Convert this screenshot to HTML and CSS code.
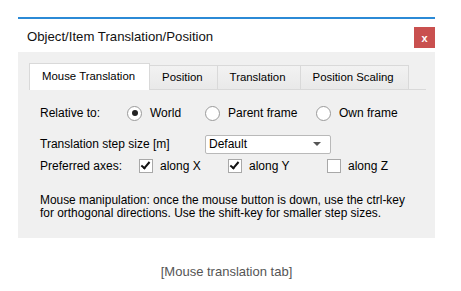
FILE: index.html
```html
<!DOCTYPE html>
<html lang="en">
<head>
    <meta charset="UTF-8">
    <title>Object/Item Translation/Position</title>
    <link rel="stylesheet" href="styles.css">
</head>
<body>
    <div class="figure">
        <div class="dialog">
            <div class="titlebar">
                <span class="title">Object/Item Translation/Position</span>
                <span class="close">x</span>
            </div>
            <div class="panel">
                <div class="tabs">
                    <div class="tab active">Mouse Translation</div>
                    <div class="tab">Position</div>
                    <div class="tab">Translation</div>
                    <div class="tab">Position Scaling</div>
                </div>
                <div class="pane">
                    <div class="row row-relative">
                        <span class="label label-relative">Relative to:</span>
                        <label class="option opt-world"><span class="radio checked"></span>World</label>
                        <label class="option opt-parent"><span class="radio"></span>Parent frame</label>
                        <label class="option"><span class="radio"></span>Own frame</label>
                    </div>
                    <div class="row row-step">
                        <span class="label label-step">Translation step size [m]</span>
                        <div class="combo">
                            <span>Default</span>
                            <span class="arrow"></span>
                        </div>
                    </div>
                    <div class="row row-axes">
                        <span class="label label-axes">Preferred axes:</span>
                        <label class="option opt-x"><span class="check checked"></span>along X</label>
                        <label class="option opt-y"><span class="check checked"></span>along Y</label>
                        <label class="option"><span class="check"></span>along Z</label>
                    </div>
                    <p class="note">Mouse manipulation: once the mouse button is down, use the ctrl-key<br>for orthogonal directions. Use the shift-key for smaller step sizes.</p>
                </div>
            </div>
        </div>
        <div class="caption">[Mouse translation tab]</div>
    </div>
</body>
</html>
```

FILE: styles.css
```css
body {
    margin: 0;
    background: #fff;
    font-family: "Liberation Sans", Arial, sans-serif;
    font-size: 12px;
    color: #000;
}

.figure {
    width: 417px;
    margin: 17px 0 0 18px;
}

.dialog {
    border-top: 2px solid #2b8ad6;
}

.titlebar {
    height: 33px;
    display: flex;
    justify-content: space-between;
    background: #fff;
}

.title {
    font-size: 13.2px;
    padding: 10px 0 0 9px;
    color: #111;
}

.close {
    width: 21px;
    height: 21px;
    margin-top: 8px;
    background: #c9504f;
    color: #fff;
    font-weight: bold;
    font-size: 11px;
    display: flex;
    align-items: center;
    justify-content: center;
}

.panel {
    height: 175px;
    background: #f0f0f0;
    padding: 11px 9px 0 11px;
}

.tabs {
    display: flex;
    align-items: flex-end;
    height: 26px;
    border-bottom: 1px solid #d9d9d9;
    font-size: 11.4px;
}

.tab {
    height: 23px;
    line-height: 23px;
    padding: 0 14px 0 12px;
    border: 1px solid #d9d9d9;
    border-bottom: none;
    background: linear-gradient(#f2f2f2, #e9e9e9);
}

.tab + .tab {
    border-left: none;
}

.tab.active {
    height: 26px;
    line-height: 24px;
    background: #fff;
    margin-bottom: -1px;
    border-right: 1px solid #d9d9d9;
}

.pane {
    padding-left: 11px;
}

.row {
    display: flex;
    align-items: center;
    height: 20px;
}

.row-relative { margin-top: 13px; }
.row-step { margin-top: 11px; }
.row-axes { margin-top: 2px; }

.label-relative { width: 87px; }
.label-step { width: 165px; }
.label-axes { width: 99px; }

.option {
    display: flex;
    align-items: center;
}

.opt-world { width: 78px; }
.opt-parent { width: 111px; }
.opt-x { width: 89px; }
.opt-y { width: 99px; }

.radio {
    width: 13px;
    height: 13px;
    border: 1px solid #9a9a9a;
    border-radius: 50%;
    background: #fff;
    margin-right: 8px;
    display: flex;
    align-items: center;
    justify-content: center;
}

.radio.checked::after {
    content: "";
    width: 6px;
    height: 6px;
    border-radius: 50%;
    background: #222;
}

.check {
    width: 12px;
    height: 12px;
    border: 1px solid #a8a8a8;
    background: #fff;
    margin-right: 7px;
    position: relative;
}

.check.checked::after {
    content: "";
    position: absolute;
    left: 3px;
    top: 0;
    width: 3px;
    height: 7px;
    border: solid #111;
    border-width: 0 2px 2px 0;
    transform: rotate(40deg);
}

.combo {
    width: 112px;
    height: 17px;
    border: 1px solid #b9b9b9;
    border-radius: 2px;
    background: #fff;
    display: flex;
    align-items: center;
    justify-content: space-between;
    padding: 0 9px 0 3px;
}

.arrow {
    width: 0;
    height: 0;
    border-left: 4px solid transparent;
    border-right: 4px solid transparent;
    border-top: 4px solid #555;
}

.note {
    margin: 18px 0 0;
    font-size: 11.9px;
    line-height: 13px;
}

.caption {
    margin-top: 26px;
    text-align: center;
    font-size: 13px;
    color: #555;
}
```
